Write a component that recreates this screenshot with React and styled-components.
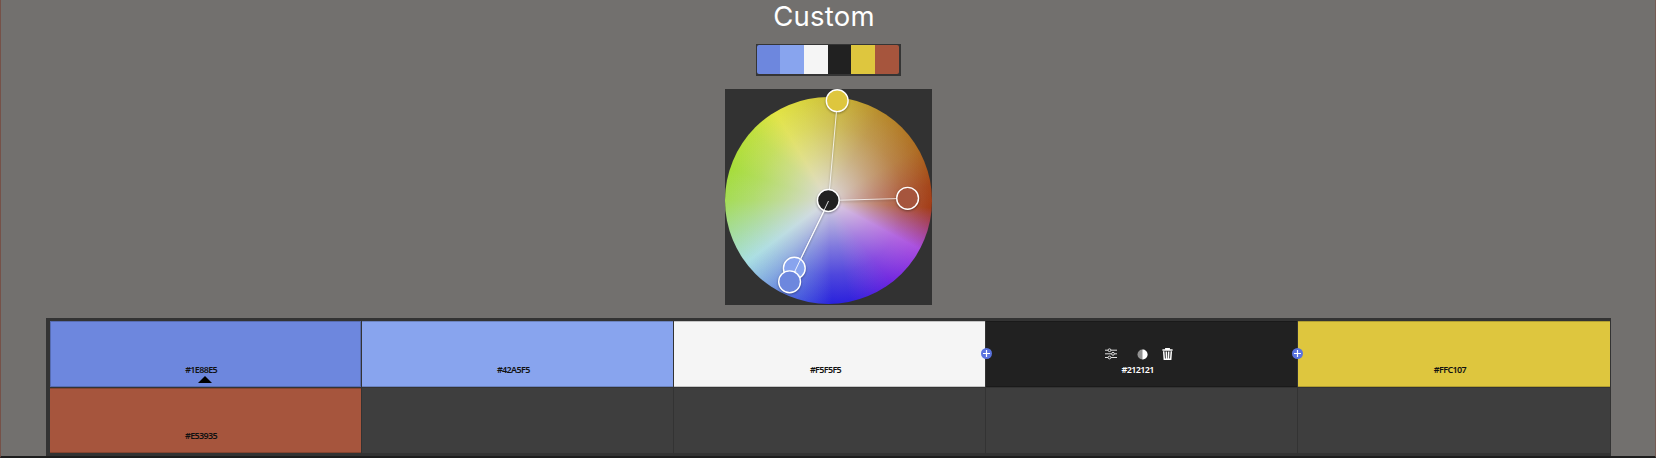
import React from "react";
import styled, { createGlobalStyle } from "styled-components";

const GlobalStyle = createGlobalStyle`
  * { box-sizing: border-box; }
  body { margin: 0; background: #72706e; overflow: hidden; }
`;

const Page = styled.main`
  width: 1656px;
  height: 458px;
  display: flex;
  flex-direction: column;
  align-items: center;
  background: #72706e;
  border-left: 1px solid #765148;
  border-right: 1px solid #765c54;
  border-bottom: 2px solid #1d1d1d;
  font-family: "Noto Sans", sans-serif;
`;

const Title = styled.h1`
  margin: 0;
  padding-right: 8px;
  height: 44px;
  line-height: 33px;
  font-family: Inter, sans-serif;
  font-size: 27.5px;
  font-weight: 400;
  letter-spacing: 0.2px;
  color: #fff;
`;

const Strip = styled.div`
  display: flex;
  width: 145px;
  height: 32px;
  padding: 1px 2px 2px 1px;
  background: #353535;
`;

const StripColor = styled.span`
  flex: 1;
  background: ${(p) => p.$color};
  &:first-child { border-radius: 2px 0 0 2px; }
  &:last-child { border-radius: 0 2px 2px 0; }
`;

const WheelBox = styled.div`
  position: relative;
  width: 207px;
  height: 216px;
  margin-top: 13px;
  padding-top: 8px;
  background: #323232;
`;

const Wheel = styled.div`
  width: 207px;
  height: 207px;
  border-radius: 50%;
  background:
    radial-gradient(circle closest-side, rgba(222, 218, 224, 1) 0%, rgba(222, 218, 224, 0.78) 18%, rgba(222, 218, 224, 0.47) 45%, rgba(222, 218, 224, 0.2) 72%, rgba(222, 218, 224, 0) 100%),
    conic-gradient(#cec03a 0deg, #b88c2c 30deg, #ae6c22 60deg, #a44418 82deg, #a33c16 94deg, #a84ce0 118deg, #7026e0 142deg, #2f22dc 168deg, #2922dc 178deg, #4b63de 199deg, #7fa7e0 217deg, #a8dfe3 233deg, #a4dc9a 252deg, #a5dc56 270deg, #a6dd3a 288deg, #bfe03e 312deg, #e2e444 329deg, #d9d53f 344deg, #cec03a 360deg);
`;

const Handles = styled.svg`
  position: absolute;
  left: 0;
  top: 0;
  overflow: visible;
  filter: drop-shadow(0 1px 1px rgba(0, 0, 0, 0.35));
`;

const Panel = styled.section`
  width: 1565px;
  height: 138px;
  margin-top: 13px;
  padding: 3px 1px 3px 4px;
  background: #333;
`;

const Grid = styled.div`
  display: grid;
  grid-template-columns: repeat(5, 1fr);
  grid-template-rows: 66px 65px;
  column-gap: 1px;
  row-gap: 1px;
`;

const Cell = styled.div`
  position: relative;
  display: flex;
  flex-direction: column;
  justify-content: flex-end;
  align-items: center;
  padding: 0 8px 10px 0;
  background: ${(p) => p.$color || "#3e3e3e"};
  border: ${(p) => (p.$color ? "1px solid rgba(0, 0, 0, 0.2)" : "0")};
  border-width: ${(p) => (p.$active ? "1px" : "1px 0 1px 0")};
  color: ${(p) => (p.$light ? "#fff" : "#111")};
`;

const Hex = styled.span`
  height: 12px;
  font-size: 9px;
  line-height: 12px;
  font-weight: 600;
  letter-spacing: -0.65px;
`;

const Marker = styled.i`
  position: absolute;
  left: 147px;
  bottom: 3px;
  border: 7px solid transparent;
  border-top: 0;
  border-bottom: 7px solid #000;
`;

const Tools = styled.div`
  display: flex;
  align-items: center;
  height: 12px;
  margin-bottom: 4px;
  padding-left: 2px;
  svg { display: block; }
`;

const ToolIcon = styled.svg`
  margin-left: ${(p) => p.$gap || 0}px;
`;

const AddButton = styled.button`
  position: absolute;
  z-index: 1;
  top: 26px;
  ${(p) => p.$side}: ${(p) => (p.$side === "left" ? "-5px" : "-6px")};
  width: 11px;
  height: 11px;
  padding: 0;
  border: 0;
  border-radius: 50%;
  background: #5a73df;
  svg { display: block; }
`;

const colors = [
  { hex: "#1E88E5", fill: "#6d87de" },
  { hex: "#42A5F5", fill: "#88a4ee" },
  { hex: "#F5F5F5", fill: "#f5f5f5" },
  { hex: "#212121", fill: "#212121" },
  { hex: "#FFC107", fill: "#dec63e" },
  { hex: "#E53935", fill: "#a6553d" },
];

const Add = ({ side }) => (
  <AddButton $side={side} aria-label="Add color">
    <svg width="11" height="11" viewBox="0 0 11 11">
      <path d="M5.5 2v7M2 5.5h7" stroke="#fff" strokeWidth="1.2" />
    </svg>
  </AddButton>
);

const CellTools = () => (
  <Tools>
    <ToolIcon width="12" height="12" viewBox="0 0 12 12" fill="none" stroke="#e0e0e0" strokeWidth="1">
      <path d="M0 2.2h3M6 2.2h6M0 5.8h6.5M9.5 5.8H12M0 9.5h3M6 9.5h6" />
      <circle cx="4.5" cy="2.2" r="1.4" />
      <circle cx="8" cy="5.8" r="1.4" />
      <circle cx="4.5" cy="9.5" r="1.4" />
    </ToolIcon>
    <ToolIcon $gap={20} width="11" height="11" viewBox="0 0 11 11">
      <circle cx="5.5" cy="5.5" r="5" fill="#929292" />
      <path d="M5.5.5a5 5 0 0 1 0 10z" fill="#fff" />
    </ToolIcon>
    <ToolIcon $gap={14} width="11" height="12" viewBox="0 0 11 12" fill="none" stroke="#fff">
      <path d="M.4 2h10.2M3.8 1.6V.6h3.4v1" strokeWidth="1.4" />
      <path d="M1.7 3.2l.6 8.1h6.4l.6-8.1M4.3 3.5l.2 7M6.7 3.5l-.2 7" strokeWidth="1.5" />
    </ToolIcon>
  </Tools>
);

export default function App() {
  return (
    <>
      <GlobalStyle />
      <Page>
        <Title>Custom</Title>
        <Strip>
          {colors.map((c) => <StripColor key={c.hex} $color={c.fill} />)}
        </Strip>
        <WheelBox>
          <Wheel />
          <Handles width="207" height="216" viewBox="0 0 207 216" fill="none" stroke="#fff">
            <path d="M103.5 111.5 112.4 12" strokeWidth="1" opacity=".8" />
            <path d="M103.5 111.5 182.8 109.3" strokeWidth="1" opacity=".75" />
            <circle cx="112.2" cy="11.7" r="10.9" fill="#dec63e" strokeWidth="1.4" />
            <circle cx="182.6" cy="109.3" r="10.9" fill="#a6553d" strokeWidth="1.4" />
            <circle cx="69.3" cy="179.2" r="10.9" fill="#88a4ee" strokeWidth="1.4" />
            <circle cx="103.3" cy="111.5" r="10.9" fill="#212121" strokeWidth="1.5" />
            <path d="M103.5 112 69.5 183" strokeWidth="1" opacity=".85" />
            <path d="M99.2 122 75.8 169.5" strokeWidth="1.2" opacity=".85" />
            <path d="M66.5 182.5h5l-2.5 4.5z" fill="#fff" stroke="none" />
            <circle cx="64.6" cy="192.8" r="10.9" fill="#6d87de" strokeWidth="1.4" />
          </Handles>
        </WheelBox>
        <Panel>
          <Grid>
            {colors.map((c, i) => (
              <Cell key={c.hex} $color={c.fill} $light={i === 3} $active={i === 0}>
                {i === 3 && <><Add side="left" /><CellTools /><Add side="right" /></>}
                <Hex>{c.hex}</Hex>
                {i === 0 && <Marker />}
              </Cell>
            ))}
            {[0, 1, 2, 3].map((i) => <Cell key={i} />)}
          </Grid>
        </Panel>
      </Page>
    </>
  );
}
